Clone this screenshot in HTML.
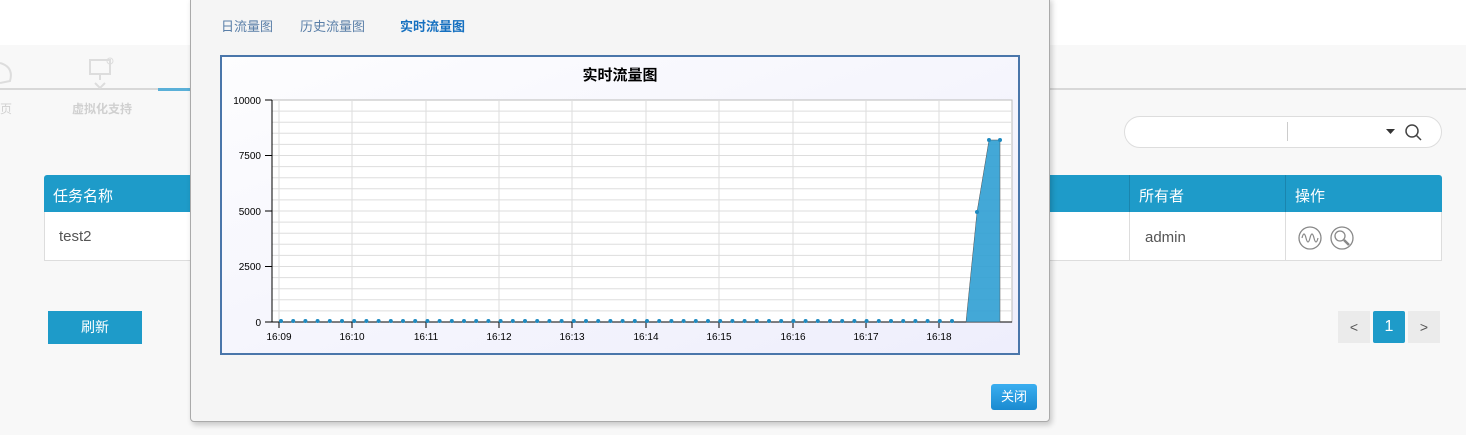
<!DOCTYPE html>
<html><head><meta charset="utf-8"><style>
*{margin:0;padding:0;box-sizing:border-box}
body{width:1466px;height:435px;overflow:hidden;background:#f8f8f8;font-family:"Liberation Sans","Noto Sans CJK SC",sans-serif;position:relative}
.abs{position:absolute}
</style></head><body>
<div class="abs" style="left:0;top:0;width:1466px;height:45px;background:#fff"></div>
<div class="abs" style="left:0;top:88px;width:1466px;height:2px;background:#d8d8d8"></div>
<div class="abs" style="left:158px;top:88px;width:40px;height:3px;background:#5ab0d8"></div>
<div class="abs" style="left:72px;top:100px;font-size:12px;color:#d0d0d0;font-weight:bold">虚拟化支持</div>
<div class="abs" style="left:0;top:100px;font-size:12px;color:#d0d0d0">页</div>
<svg class="abs" style="left:0;top:55px" width="130" height="35"><path d="M0 8 Q14 12 10 26 L0 28" fill="none" stroke="#ddd" stroke-width="2"/><rect x="90" y="5" width="20" height="14" fill="none" stroke="#ddd" stroke-width="2"/><path d="M100 19 V25 M95 28 L100 33 L105 28" stroke="#ddd" stroke-width="2" fill="none"/><circle cx="110" cy="6" r="3" fill="none" stroke="#ddd"/></svg>

<div class="abs" style="left:1124px;top:116px;width:318px;height:32px;border:1px solid #ddd;border-radius:16px;background:#fff"></div>
<div class="abs" style="left:1287px;top:122px;width:1px;height:19px;background:#ccc"></div>
<svg class="abs" style="left:1384px;top:122px" width="40" height="22"><path d="M2 7 H11 L6.5 12Z" fill="#333"/><circle cx="28" cy="9" r="6" fill="none" stroke="#444" stroke-width="1.5"/><path d="M32 13 L37 18" stroke="#444" stroke-width="1.5"/></svg>

<div class="abs" style="left:44px;top:175px;width:1398px;height:37px;background:#1e9bc9;border-radius:3px 3px 0 0"></div>
<div class="abs" style="left:53px;top:185px;font-size:15px;color:#fff">任务名称</div>
<div class="abs" style="left:1129px;top:175px;width:1px;height:37px;background:#1a85ae"></div>
<div class="abs" style="left:1285px;top:175px;width:1px;height:37px;background:#1a85ae"></div>
<div class="abs" style="left:1139px;top:185px;font-size:15px;color:#fff">所有者</div>
<div class="abs" style="left:1295px;top:185px;font-size:15px;color:#fff">操作</div>
<div class="abs" style="left:44px;top:212px;width:1398px;height:49px;background:#fff;border:1px solid #ddd;border-top:none"></div>
<div class="abs" style="left:1129px;top:212px;width:1px;height:48px;background:#ddd"></div>
<div class="abs" style="left:1285px;top:212px;width:1px;height:48px;background:#ddd"></div>
<div class="abs" style="left:59px;top:228px;font-size:15px;color:#555">test2</div>
<div class="abs" style="left:1145px;top:229px;font-size:15px;color:#555">admin</div>
<svg class="abs" style="left:1298px;top:225px" width="60" height="26"><circle cx="12" cy="13" r="11" fill="none" stroke="#888" stroke-width="1.3"/><path d="M4 13 Q6 5 8 13 T12 13 T16 13 T20 13" fill="none" stroke="#888" stroke-width="1.2"/><circle cx="44" cy="13" r="11" fill="none" stroke="#888" stroke-width="1.3"/><circle cx="42" cy="11" r="5" fill="none" stroke="#888" stroke-width="1.3"/><path d="M46 15 L51 20" stroke="#888" stroke-width="2.5"/></svg>

<div class="abs" style="left:48px;top:311px;width:94px;height:33px;background:#1e9bc9;color:#fff;font-size:14px;text-align:center;line-height:33px">刷新</div>
<div class="abs" style="left:1338px;top:311px;width:32px;height:32px;background:#ebebeb;color:#555;text-align:center;line-height:32px;font-size:14px">&lt;</div>
<div class="abs" style="left:1373px;top:311px;width:32px;height:32px;background:#1e9bc9;color:#fff;text-align:center;line-height:32px;font-size:16px;border-radius:2px">1</div>
<div class="abs" style="left:1408px;top:311px;width:32px;height:32px;background:#ebebeb;color:#555;text-align:center;line-height:32px;font-size:14px">&gt;</div>

<div class="abs" style="left:190px;top:-3px;width:860px;height:425px;background:#f5f5f5;border:1px solid #aaa;border-radius:0 0 4px 4px;box-shadow:2px 3px 6px rgba(0,0,0,.2)"></div>
<div class="abs" style="left:221px;top:16px;font-size:13px;color:#5a7fa8">日流量图</div>
<div class="abs" style="left:300px;top:16px;font-size:13px;color:#5a7fa8">历史流量图</div>
<div class="abs" style="left:400px;top:16px;font-size:13px;color:#1570c0;font-weight:bold">实时流量图</div>
<div class="abs" style="left:991px;top:384px;width:46px;height:26px;background:linear-gradient(#3aaef0,#1a8ad0);color:#fff;border-radius:3px;font-size:13px;text-align:center;line-height:26px">关闭</div>

<svg class="abs" style="left:220px;top:55px" width="801" height="301" font-family="Liberation Sans, sans-serif">
<defs><linearGradient id="bg" x1="0" y1="0" x2="1" y2="1"><stop offset="0" stop-color="#fdfdfe"/><stop offset="1" stop-color="#eeeefc"/></linearGradient></defs>
<rect x="1" y="1" width="798" height="298" fill="url(#bg)" stroke="#4a76aa" stroke-width="2"/>
<text x="400" y="25" text-anchor="middle" font-size="15" font-weight="bold" font-family="Liberation Sans, Noto Sans CJK SC, sans-serif">实时流量图</text>
<rect x="52" y="45" width="740" height="222" fill="#fff" stroke="#bbb"/>
<g stroke="#ddd" stroke-width="1">
<path d="M52 56.1H792M52 67.2H792M52 78.3H792M52 89.4H792M52 100.5H792M52 111.6H792M52 122.7H792M52 133.8H792M52 144.9H792M52 156H792M52 167.1H792M52 178.2H792M52 189.3H792M52 200.4H792M52 211.5H792M52 222.6H792M52 233.7H792M52 244.8H792M52 255.9H792"/>
<path d="M59 45V267M132 45V267M206 45V267M279 45V267M352 45V267M426 45V267M499 45V267M573 45V267M646 45V267M719 45V267"/>
</g>
<path d="M52 45V267H792" fill="none" stroke="#000"/>
<g stroke="#000"><path d="M45 45H52M45 100.5H52M45 156H52M45 211.5H52M45 267H52M59 267V273M132 267V273M206 267V273M279 267V273M352 267V273M426 267V273M499 267V273M573 267V273M646 267V273M719 267V273"/></g>
<g font-size="10" text-anchor="end"><text x="41" y="49">10000</text><text x="41" y="104">7500</text><text x="41" y="160">5000</text><text x="41" y="215">2500</text><text x="41" y="271">0</text></g>
<g font-size="10" text-anchor="middle"><text x="59" y="285">16:09</text><text x="132" y="285">16:10</text><text x="206" y="285">16:11</text><text x="279" y="285">16:12</text><text x="352" y="285">16:13</text><text x="426" y="285">16:14</text><text x="499" y="285">16:15</text><text x="573" y="285">16:16</text><text x="646" y="285">16:17</text><text x="719" y="285">16:18</text></g>
<path d="M746 267 L757 157 L769 85 L780 85 L780 267Z" fill="#2f9fd3" fill-opacity=".9" stroke="#555" stroke-width=".5"/>
<g fill="#1e8ac0" id="dots"></g>
</svg>
<script>
var g=document.getElementById('dots'),s='';
for(var x=61;x<=742;x+=12.2)s+='<circle cx="'+x+'" cy="266" r="2"/>';
s+='<circle cx="757" cy="157" r="2"/><circle cx="769" cy="85" r="2"/><circle cx="780" cy="85" r="2"/>';
g.innerHTML=s;
</script>
</body></html>
